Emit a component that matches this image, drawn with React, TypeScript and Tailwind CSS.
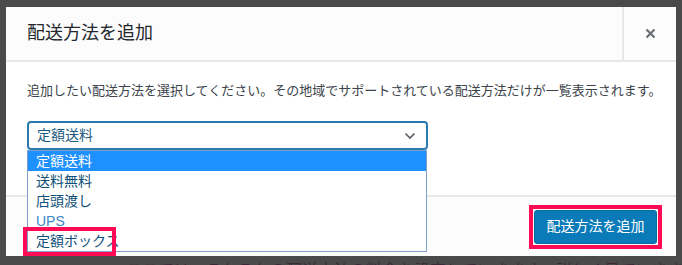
import React from 'react';

const items = ['定額送料', '送料無料', '店頭渡し', 'UPS', '定額ボックス'];

export default function App() {
    return (
        <div
            className="w-[682px] h-[265px] overflow-hidden bg-[#4a4a4a] pt-[7px] pl-[6px]"
            style={{ fontFamily: "'Liberation Sans', 'Noto Sans CJK JP', sans-serif" }}
        >
            {/* Modal */}
            <div className="relative w-[670px] h-[249px] bg-white flex flex-col">
                {/* Header */}
                <div className="h-[55px] flex bg-[#fcfcfc] border-b-2 border-[#e8e8e8]">
                    <h1 className="flex-1 flex items-center pl-[21px] text-[18px] text-[#23282d]">配送方法を追加</h1>
                    <button className="w-[54px] flex items-center justify-center border-l-2 border-[#e8e8e8] text-[#6a6f75]">
                        <svg width="11" height="11" viewBox="0 0 11 11">
                            <path d="M1.5 1.5 L9.5 9.5 M9.5 1.5 L1.5 9.5" stroke="currentColor" strokeWidth="2.2" />
                        </svg>
                    </button>
                </div>

                {/* Body */}
                <div className="pl-[21px] pt-[19px]">
                    <p className="text-[13px] leading-[20px] text-[#3c434a]">
                        追加したい配送方法を選択してください。その地域でサポートされている配送方法だけが一覧表示されます。
                    </p>
                    <div className="mt-[20px] w-[401px] h-[29px] flex items-center justify-between pl-[8px] pr-[10px] border-2 border-[#2a7ab0] rounded-[4px] text-[14px] text-[#1d5a80]">
                        <span>定額送料</span>
                        <svg width="12" height="8" viewBox="0 0 12 8">
                            <path d="M1.5 1.5 L6 6 L10.5 1.5" stroke="#555d66" strokeWidth="1.6" fill="none" />
                        </svg>
                    </div>
                </div>

                {/* Footer */}
                <div className="mt-auto h-[61px] bg-[#fcfcfc] border-t-2 border-[#e8e8e8] flex items-center justify-end pr-[14px]">
                    <div className="border-4 border-[#ff0a54] p-px">
                        <button className="w-[123px] h-[34px] rounded-[3px] bg-[#0a7bb8] border border-[#076aa0] text-white text-[14px]">
                            配送方法を追加
                        </button>
                    </div>
                </div>

                {/* Open dropdown list */}
                <ul className="absolute left-[21px] top-[143px] w-[400px] h-[102px] bg-white border border-[#7e9fcc] text-[14px]">
                    {items.map((item, i) => (
                        <li
                            key={item}
                            className={`h-[20px] leading-[20px] pl-[8px] ${i === 0 ? 'bg-[#1e90ff] text-white' : i === 3 ? 'text-[#3b86c4]' : 'text-[#0f4f78]'}`}
                        >
                            {item}
                        </li>
                    ))}
                </ul>

                {/* Highlight markers */}
                <div className="absolute left-[17px] top-[220px] w-[93px] h-[29px] border-4 border-[#ff0a54]" />
            </div>

            {/* Page behind overlay */}
            <p className="pl-[120px] mt-[3px] text-[16px] text-[#3a2a38] whitespace-nowrap">
                ここでは、それぞれの配送方法の料金を設定していきます。詳しく見ていきましょう
            </p>
        </div>
    );
}
